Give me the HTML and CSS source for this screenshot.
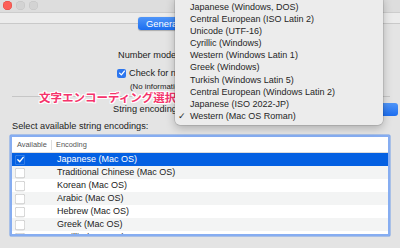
FILE: index.html
```html
<!DOCTYPE html>
<html>
<head>
<meta charset="utf-8">
<link rel="stylesheet" href="styles.css">
</head>
<body>
<div class="window">
  <div class="titlebar">
    <span class="light red"></span>
    <span class="light"></span>
    <span class="light"></span>
  </div>
  <div class="tabbar">
    <div class="tab">General</div>
  </div>
  <div class="content">
    <div class="row number-row">Number mode:</div>
    <div class="row check-row"><span class="cb checked"><svg viewBox="0 0 10 10" width="8" height="8"><path d="M2 5.2 L4.2 7.4 L8 2.6" fill="none" stroke="#fff" stroke-width="1.6" stroke-linecap="round" stroke-linejoin="round"/></svg></span>Check for number formats</div>
    <div class="row note-row">(No information available)</div>
    <div class="sep"></div>
    <div class="row string-row"><span>String encoding:</span><span class="popup"></span></div>
    <div class="row select-row">Select available string encodings:</div>
    <div class="table">
      <div class="thead">
        <div class="th th-avail">Available</div>
        <div class="th th-enc">Encoding</div>
      </div>
      <div class="tr sel"><span class="cell-cb"><span class="cb on"><svg viewBox="0 0 10 10" width="9" height="9"><path d="M2 5.2 L4.2 7.4 L8 2.6" fill="none" stroke="#fff" stroke-width="1.5" stroke-linecap="round" stroke-linejoin="round"/></svg></span></span><span class="td">Japanese (Mac OS)</span></div>
      <div class="tr alt"><span class="cell-cb"><span class="cb"></span></span><span class="td">Traditional Chinese (Mac OS)</span></div>
      <div class="tr"><span class="cell-cb"><span class="cb"></span></span><span class="td">Korean (Mac OS)</span></div>
      <div class="tr alt"><span class="cell-cb"><span class="cb"></span></span><span class="td">Arabic (Mac OS)</span></div>
      <div class="tr"><span class="cell-cb"><span class="cb"></span></span><span class="td">Hebrew (Mac OS)</span></div>
      <div class="tr alt"><span class="cell-cb"><span class="cb"></span></span><span class="td">Greek (Mac OS)</span></div>
      <div class="tr"><span class="cell-cb"><span class="cb"></span></span><span class="td">Cyrillic (Mac OS)</span></div>
    </div>
  </div>
  <div class="annotation">文字エンコーディング選択</div>
  <div class="menu">
    <div class="mi">Japanese (Windows, DOS)</div>
    <div class="mi">Central European (ISO Latin 2)</div>
    <div class="mi">Unicode (UTF-16)</div>
    <div class="mi">Cyrillic (Windows)</div>
    <div class="mi">Western (Windows Latin 1)</div>
    <div class="mi">Greek (Windows)</div>
    <div class="mi">Turkish (Windows Latin 5)</div>
    <div class="mi">Central European (Windows Latin 2)</div>
    <div class="mi">Japanese (ISO 2022-JP)</div>
    <div class="mi checked"><span class="tick">✓</span>Western (Mac OS Roman)</div>
  </div>
</div>
</body>
</html>
```
FILE: styles.css
```css
html, body {
  margin: 0;
  padding: 0;
}
body {
  width: 400px;
  height: 248px;
  overflow: hidden;
  font-family: "Liberation Sans", Arial, sans-serif;
  font-size: 9.2px;
  color: #222;
  background: #e4e4e4;
}
.window {
  position: relative;
  width: 400px;
  height: 248px;
  background: #e4e4e4;
}
.titlebar {
  height: 13px;
  background: #dddddd;
  display: flex;
  align-items: center;
  gap: 4px;
  padding-left: 3px;
  box-sizing: border-box;
  border-bottom: 1px solid #cdcdcd;
}
.light {
  width: 9px;
  height: 9px;
  border-radius: 50%;
  background: #d3d3d3;
  box-shadow: inset 0 0 0 0.5px #c2c2c2;
  margin-top: -2px;
}
.light.red {
  background: #fc5f57;
  box-shadow: inset 0 0 0 0.5px #e0443e;
}
.tabbar {
  height: 18px;
  background: linear-gradient(#ececec 0, #ececec 10px, #c9c9c9 10px, #c9c9c9 11px, #e4e4e4 11px);
  display: flex;
  justify-content: flex-start;
  padding-left: 138px;
  box-sizing: border-box;
}
.tab {
  margin-top: 4px;
  height: 13px;
  width: 60px;
  background: linear-gradient(#4f95f8, #1c6ef1);
  border-radius: 3px;
  color: #fff;
  font-size: 9.4px;
  line-height: 13px;
  padding-left: 8px;
  box-sizing: border-box;
  box-shadow: 0 0.5px 1px rgba(0,0,0,0.25);
}
.content {
  padding: 0 10px;
}
.row {
  height: 14px;
  line-height: 14px;
  white-space: nowrap;
}
.number-row {
  margin-top: 17px;
  padding-left: 108px;
}
.check-row {
  margin-top: 4px;
  padding-left: 107px;
  display: flex;
  align-items: center;
  gap: 3px;
}
.cb {
  display: inline-flex;
  align-items: center;
  justify-content: center;
  width: 9px;
  height: 9px;
  border-radius: 2px;
  background: #fff;
  box-shadow: inset 0 0 0 0.5px #b4b4b4, 0 0.5px 0.5px rgba(0,0,0,0.12);
  box-sizing: border-box;
}
.cb.checked {
  background: #2d76ee;
  box-shadow: none;
}
.cb.on {
  background: transparent;
  box-shadow: inset 0 0 0 0.5px rgba(255,255,255,0.35);
}
.note-row {
  margin-top: 1px;
  height: 11px;
  line-height: 11px;
  font-size: 7.8px;
  padding-left: 120px;
}
.sep {
  margin-top: 4px;
  margin-left: 2px;
  height: 1px;
  background: #c6c6c6;
}
.string-row {
  margin-top: 5px;
  padding-left: 103px;
  display: flex;
  align-items: center;
}
.popup {
  margin-left: auto;
  margin-right: -8px;
  width: 120px;
  height: 13px;
  border-radius: 3px;
  background: linear-gradient(#4f95f8, #1c6ef1);
}
.select-row {
  margin-top: 3px;
  padding-left: 2px;
}
.table {
  margin-top: 2px;
  height: 101px;
  background: #fff;
  border: 2px solid #86adf1;
  box-shadow: 0 0 0 0.5px #6e9be8;
  overflow: hidden;
  box-sizing: border-box;
  border-radius: 1px;
  font-size: 9px;
}
.thead {
  height: 16px;
  display: flex;
  align-items: center;
  border-bottom: 1px solid #dcdcdc;
  box-sizing: border-box;
  font-size: 7.4px;
  color: #555;
}
.th-avail {
  width: 40px;
  padding-left: 5px;
  box-sizing: border-box;
  border-right: 1px solid #dedede;
  line-height: 10px;
}
.th-enc {
  padding-left: 4px;
}
.tr {
  height: 13px;
  display: flex;
  align-items: center;
  white-space: nowrap;
}
.tr.alt {
  background: #f3f4f4;
}
.tr.sel {
  background: #0460e2;
  color: #fff;
}
.cell-cb {
  width: 45px;
  padding-left: 3px;
  box-sizing: border-box;
  display: flex;
  align-items: center;
}
.cell-cb .cb {
  width: 10px;
  height: 10px;
}
.td {
  line-height: 13px;
}
.annotation {
  position: absolute;
  left: 39px;
  top: 89px;
  font-family: "Noto Sans CJK JP", sans-serif;
  font-weight: 700;
  font-size: 11.5px;
  line-height: 16px;
  color: #f5336b;
  text-shadow: -1px 0 #fff, 1px 0 #fff, 0 -1px #fff, 0 1px #fff, -1px -1px #fff, 1px 1px #fff, -1px 1px #fff, 1px -1px #fff;
  white-space: nowrap;
}
.menu {
  position: absolute;
  left: 175px;
  top: -4px;
  width: 208px;
  height: 129px;
  padding-top: 5px;
  box-sizing: border-box;
  background: #ececec;
  border-radius: 5px;
  box-shadow: 0 0 0 0.5px rgba(0,0,0,0.18), 0 3px 10px rgba(0,0,0,0.25);
  font-size: 9px;
}
.mi {
  position: relative;
  height: 12.1px;
  line-height: 12.1px;
  padding-left: 15px;
  white-space: nowrap;
  color: #262626;
}
.tick {
  position: absolute;
  left: 3px;
  top: 0;
  font-size: 9px;
}
```
